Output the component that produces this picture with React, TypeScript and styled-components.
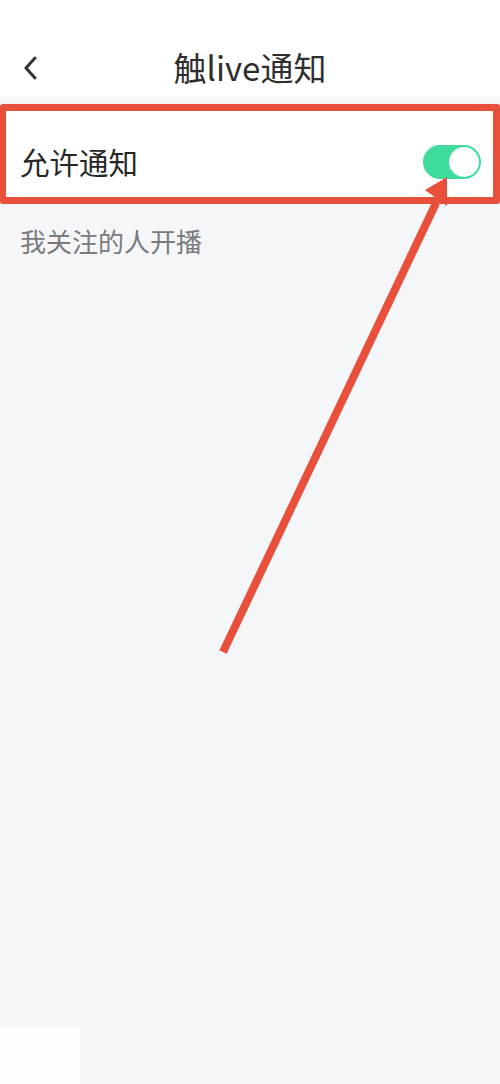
import React from "react";
import styled, { createGlobalStyle } from "styled-components";

const GlobalStyle = createGlobalStyle`
  html, body {
    margin: 0;
    padding: 0;
    background: #f5f6fa;
  }
  body {
    font-family: "Noto Sans CJK SC", "Noto Sans", sans-serif;
  }
`;

const Page = styled.div`
  position: relative;
  width: 500px;
  height: 1084px;
  background: #f5f6fa;
  overflow: hidden;
  display: flex;
  flex-direction: column;
`;

const Header = styled.header`
  height: 97px;
  box-sizing: border-box;
  padding-top: 38px;
  background: #ffffff;
  display: grid;
  grid-template-columns: 80px 1fr 80px;
  align-items: center;
`;

const BackButton = styled.button`
  border: none;
  background: none;
  padding: 0 0 0 22px;
  height: 100%;
  display: flex;
  align-items: center;
  cursor: pointer;
`;

const Title = styled.h1`
  margin: 0;
  text-align: center;
  font-size: 33px;
  font-weight: 400;
  color: #2e2e2e;
  line-height: 1;
`;

const SettingRow = styled.div`
  margin-top: 7px;
  height: 100px;
  box-sizing: border-box;
  border: 7px solid #e8503b;
  border-left-width: 6px;
  border-radius: 3px;
  background: #ffffff;
  display: flex;
  align-items: center;
  justify-content: space-between;
  padding: 16px 12px 0 14px;
`;

const RowLabel = styled.span`
  font-size: 29.5px;
  color: #262626;
  line-height: 1;
`;

const Toggle = styled.div<{ $on: boolean }>`
  position: relative;
  width: 58px;
  height: 34px;
  border-radius: 17px;
  background: ${(p) => (p.$on ? "#3fdb9c" : "#d6d6d6")};
`;

const Knob = styled.span<{ $on: boolean }>`
  position: absolute;
  top: 2px;
  left: ${(p) => (p.$on ? "26px" : "2px")};
  width: 30px;
  height: 30px;
  border-radius: 50%;
  background: #ffffff;
`;

const SectionNote = styled.div`
  padding: 22px 0 0 20px;
  font-size: 26px;
  color: #7a7a7a;
  line-height: 30px;
`;

const CornerPatch = styled.div`
  position: absolute;
  left: 0;
  bottom: 0;
  width: 80px;
  height: 57px;
  background: #fdfdfd;
`;

const Annotation = styled.svg`
  position: absolute;
  left: 0;
  top: 0;
  pointer-events: none;
`;

export default function App() {
  const on = true;
  return (
    <>
      <GlobalStyle />
      <Page>
        <Header>
          <BackButton aria-label="返回">
            <svg width="16" height="24" viewBox="0 0 16 24">
              <path
                d="M13 2 L4 12 L13 22"
                fill="none"
                stroke="#333"
                strokeWidth="3"
                strokeLinecap="round"
                strokeLinejoin="round"
              />
            </svg>
          </BackButton>
          <Title>触live通知</Title>
          <div />
        </Header>
        <SettingRow>
          <RowLabel>允许通知</RowLabel>
          <Toggle $on={on}>
            <Knob $on={on} />
          </Toggle>
        </SettingRow>
        <SectionNote>我关注的人开播</SectionNote>
        <CornerPatch />
        <Annotation width="500" height="1084" viewBox="0 0 500 1084">
          <line
            x1="223"
            y1="652"
            x2="436"
            y2="203"
            stroke="#e8503b"
            strokeWidth="8"
          />
          <polygon points="447,177 425,190 447,206" fill="#e8503b" />
        </Annotation>
      </Page>
    </>
  );
}
